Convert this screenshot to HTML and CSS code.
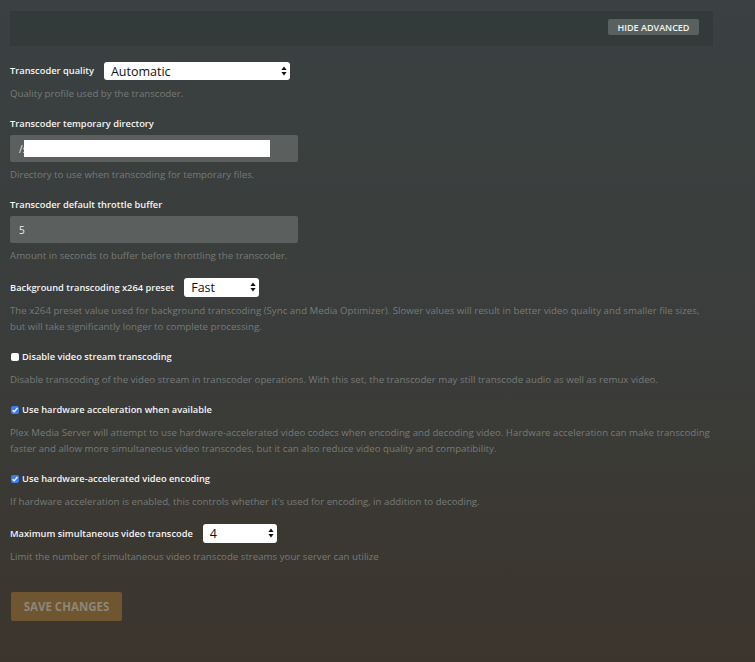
FILE: index.html
```html
<!DOCTYPE html>
<html lang="en">
<head>
    <meta charset="UTF-8">
    <meta name="viewport" content="width=device-width, initial-scale=1.0">
    <title>Transcoder settings</title>
    <link rel="stylesheet" href="styles.css">
</head>
<body>
    <div class="container">
        <div class="top-bar">
            <button class="btn-adv">Hide Advanced</button>
        </div>

        <div class="group">
            <div class="inline-row">
                <label class="label">Transcoder quality</label>
                <div class="select select-quality">
                    <span>Automatic</span>
                    <svg class="arrows" width="6" height="10" viewBox="0 0 6 10"><path d="M3 0.5L5.6 4H0.4z M3 9.5L5.6 6H0.4z" fill="#111"/></svg>
                </div>
            </div>
            <p class="help">Quality profile used by the transcoder.</p>
        </div>

        <div class="group">
            <label class="label">Transcoder temporary directory</label>
            <div class="text-input">
                <span>/s</span>
                <span class="redact"></span>
            </div>
            <p class="help">Directory to use when transcoding for temporary files.</p>
        </div>

        <div class="group">
            <label class="label">Transcoder default throttle buffer</label>
            <div class="text-input"><span>5</span></div>
            <p class="help">Amount in seconds to buffer before throttling the transcoder.</p>
        </div>

        <div class="group">
            <div class="inline-row">
                <label class="label">Background transcoding x264 preset</label>
                <div class="select select-preset">
                    <span>Fast</span>
                    <svg class="arrows" width="6" height="10" viewBox="0 0 6 10"><path d="M3 0.5L5.6 4H0.4z M3 9.5L5.6 6H0.4z" fill="#111"/></svg>
                </div>
            </div>
            <p class="help">The x264 preset value used for background transcoding (Sync and Media Optimizer). Slower values will result in better video quality and smaller file sizes, but will take significantly longer to complete processing.</p>
        </div>

        <div class="group">
            <label class="check-row">
                <span class="box"></span>
                Disable video stream transcoding
            </label>
            <p class="help">Disable transcoding of the video stream in transcoder operations. With this set, the transcoder may still transcode audio as well as remux video.</p>
        </div>

        <div class="group">
            <label class="check-row">
                <span class="box checked"><svg width="8" height="8" viewBox="0 0 8 8"><path d="M1.6 4.2L3.2 5.8L6.4 2" stroke="#fff" stroke-width="1.3" fill="none"/></svg></span>
                Use hardware acceleration when available
            </label>
            <p class="help">Plex Media Server will attempt to use hardware-accelerated video codecs when encoding and decoding video. Hardware acceleration can make transcoding faster and allow more simultaneous video transcodes, but it can also reduce video quality and compatibility.</p>
        </div>

        <div class="group">
            <label class="check-row">
                <span class="box checked"><svg width="8" height="8" viewBox="0 0 8 8"><path d="M1.6 4.2L3.2 5.8L6.4 2" stroke="#fff" stroke-width="1.3" fill="none"/></svg></span>
                Use hardware-accelerated video encoding
            </label>
            <p class="help">If hardware acceleration is enabled, this controls whether it's used for encoding, in addition to decoding.</p>
        </div>

        <div class="group">
            <div class="inline-row">
                <label class="label">Maximum simultaneous video transcode</label>
                <div class="select select-max">
                    <span>4</span>
                    <svg class="arrows" width="6" height="10" viewBox="0 0 6 10"><path d="M3 0.5L5.6 4H0.4z M3 9.5L5.6 6H0.4z" fill="#111"/></svg>
                </div>
            </div>
            <p class="help">Limit the number of simultaneous video transcode streams your server can utilize</p>
        </div>

        <button class="btn-save">Save Changes</button>
    </div>
</body>
</html>
```

FILE: styles.css
```css
html, body {
    margin: 0;
    padding: 0;
}
body {
    min-height: 662px;
    background: linear-gradient(to bottom, #3a4142 0%, #3a3d3b 50%, #3c352d 100%);
    font-family: "Open Sans", "Liberation Sans", sans-serif;
    color: #fff;
}
.container {
    width: 703px;
    padding: 11px 0 0 10px;
}
.top-bar {
    height: 35px;
    background: #333a3a;
    display: flex;
    justify-content: flex-end;
    align-items: center;
    padding-right: 14px;
    margin-bottom: 16px;
}
.btn-adv {
    border: none;
    border-radius: 2px;
    background: #596060;
    color: #f2f2f2;
    font-family: inherit;
    font-weight: 600;
    font-size: 9px;
    text-transform: uppercase;
    height: 16px;
    width: 91px;
    padding: 0;
    margin-top: -3px;
}
.group {
    margin-bottom: 14px;
}
.inline-row {
    display: flex;
    align-items: center;
}
.label {
    display: block;
    font-size: 9.3px;
    font-weight: 600;
    color: #f4f4f4;
    line-height: 16px;
}
.group > .label {
    margin-top: 3px;
}
.inline-row .label {
    margin-right: 10px;
}
.select {
    position: relative;
    background: #fff;
    border-radius: 3px;
    height: 18px;
    display: flex;
    align-items: center;
    color: #111;
    font-size: 12.5px;
    font-weight: 500;
    padding-left: 7px;
    box-sizing: border-box;
}
.select .arrows {
    position: absolute;
    right: 3px;
    top: 4px;
}
.select-quality {
    width: 186px;
}
.select-preset {
    width: 75px;
    height: 19px;
}
.select-max {
    width: 74px;
    height: 19px;
}
.help {
    margin: 6px 0 0;
    font-size: 9.7px;
    line-height: 16px;
    color: #767a78;
}
.text-input + .help {
    margin-top: 5px;
}
.text-input {
    margin-top: 3px;
    width: 288px;
    height: 27px;
    background: #5b5f5e;
    border-radius: 2px;
    display: flex;
    align-items: center;
    padding-left: 9px;
    box-sizing: border-box;
    font-size: 10px;
    color: #eee;
}
.redact {
    display: inline-block;
    width: 246px;
    height: 17px;
    background: #fff;
    margin-left: -3px;
}
.check-row {
    display: flex;
    align-items: center;
    font-size: 9.3px;
    font-weight: 600;
    color: #f4f4f4;
    line-height: 16px;
    margin-top: 12px;
}
.check-row + .help {
    margin-top: 7px;
}
.box {
    width: 8px;
    height: 8px;
    border-radius: 2px;
    background: #fff;
    margin: 0 3px 0 1px;
    display: flex;
    align-items: center;
    justify-content: center;
}
.box.checked {
    background: #3b7ded;
}
.btn-save {
    margin-top: 13px;
    margin-left: 1px;
    width: 111px;
    height: 29px;
    border: none;
    border-radius: 2px;
    background: #6f5530;
    color: #8d8679;
    font-family: inherit;
    font-weight: 700;
    font-size: 11.5px;
    text-transform: uppercase;
    padding: 0;
}
```
